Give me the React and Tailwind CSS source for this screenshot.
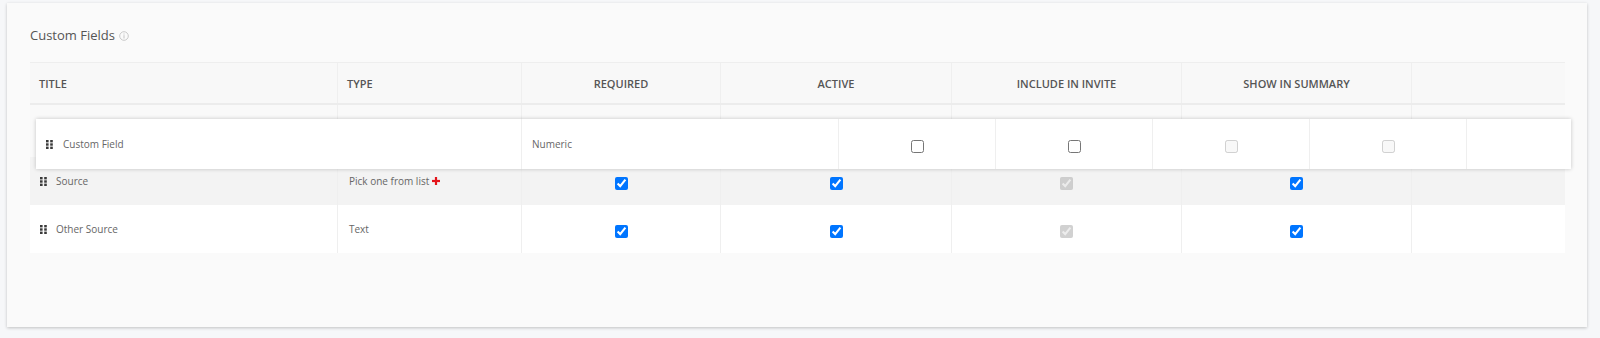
import React from 'react';

const headers = [
  { label: 'Title', w: 'w-[308px]', align: 'justify-start pl-[9px]' },
  { label: 'Type', w: 'w-[184px]', align: 'justify-start pl-[9px]' },
  { label: 'Required', w: 'w-[199px]', align: 'justify-center' },
  { label: 'Active', w: 'w-[231px]', align: 'justify-center' },
  { label: 'Include in invite', w: 'w-[230px]', align: 'justify-center' },
  { label: 'Show in summary', w: 'w-[230px]', align: 'justify-center' },
  { label: '', w: 'w-[153px]', align: 'justify-center' },
];

const rows = [
  { title: 'Source', type: 'Pick one from list', plus: true, bg: 'bg-[#f3f3f3]' },
  { title: 'Other Source', type: 'Text', plus: false, bg: 'bg-white' },
];

const Grip = () => (
  <svg width="7" height="9" viewBox="0 0 7 9" className="shrink-0">
    <rect x="0" y="0" width="2.6" height="2.4" fill="#3a3a3a" />
    <rect x="4.2" y="0" width="2.6" height="2.4" fill="#3a3a3a" />
    <rect x="0" y="3.3" width="2.6" height="2.4" fill="#3a3a3a" />
    <rect x="4.2" y="3.3" width="2.6" height="2.4" fill="#3a3a3a" />
    <rect x="0" y="6.6" width="2.6" height="2.4" fill="#3a3a3a" />
    <rect x="4.2" y="6.6" width="2.6" height="2.4" fill="#3a3a3a" />
  </svg>
);

const Box = ({ checked, disabled }) => (
  <input
    type="checkbox"
    defaultChecked={checked}
    disabled={disabled}
    className="block w-[13px] h-[13px] mt-[4px]"
  />
);

const App = () => {
  return (
    <div className="min-h-screen bg-[#f6f7f9] pt-[3px] pl-[7px] pr-[13px] font-['Open_Sans',sans-serif]">
      <div className="relative h-[324px] bg-[#fafafa] px-[23px] shadow-[0_1px_3px_rgba(0,0,0,0.22)]">
        {/* heading */}
        <div className="pt-[21px] h-[42px] flex items-center gap-[4px]">
          <span className="text-[13px] leading-[18px] text-[#555]">Custom Fields</span>
          <svg width="10" height="10" viewBox="0 0 10 10" className="mt-[3px]">
            <circle cx="5" cy="5" r="4.3" fill="none" stroke="#c4c4c4" strokeWidth="0.9" />
            <rect x="4.5" y="4.2" width="1" height="3.3" fill="#c4c4c4" />
            <rect x="4.5" y="2.5" width="1" height="1" fill="#c4c4c4" />
          </svg>
        </div>

        {/* table */}
        <div className="mt-[17px] w-[1535px]">
          <div className="flex h-[43px] bg-[#f8f8f8] border-t border-[#eeeeee] border-b-2 border-b-[#ececec]">
            {headers.map((h, i) => (
              <div
                key={i}
                className={`${h.w} ${h.align} flex items-center pt-[3px] text-[11px] font-semibold uppercase text-[#555] ${i < headers.length - 1 ? 'border-r border-[#efefef]' : ''}`}
              >
                {h.label}
              </div>
            ))}
          </div>

          {/* placeholder left behind by the row being dragged */}
          <div className="flex h-[52px] bg-[#f9f9f9]">
            {headers.map((h, i) => (
              <div key={i} className={`${h.w} ${i < headers.length - 1 ? 'border-r border-[#efefef]' : ''}`} />
            ))}
          </div>

          {rows.map((r) => (
            <div key={r.title} className={`flex h-[48px] ${r.bg} text-[10px] text-[#666]`}>
              <div className="w-[308px] flex items-center gap-[9px] pl-[10px] border-r border-[#efefef]">
                <Grip />
                <span>{r.title}</span>
              </div>
              <div className="w-[184px] flex items-center pl-[11px] border-r border-[#efefef]">
                <span>{r.type}</span>
                {r.plus && (
                  <svg width="8" height="8" viewBox="0 0 8 8" className="ml-[3px]">
                    <rect x="2.9" y="0" width="2.2" height="8" fill="#e3141b" />
                    <rect x="0" y="2.9" width="8" height="2.2" fill="#e3141b" />
                  </svg>
                )}
              </div>
              <div className="w-[199px] flex items-center justify-center border-r border-[#efefef]">
                <Box checked />
              </div>
              <div className="w-[231px] flex items-center justify-center border-r border-[#efefef]">
                <Box checked />
              </div>
              <div className="w-[230px] flex items-center justify-center border-r border-[#efefef]">
                <Box checked disabled />
              </div>
              <div className="w-[230px] flex items-center justify-center border-r border-[#efefef]">
                <Box checked />
              </div>
              <div className="w-[153px]" />
            </div>
          ))}
        </div>

        {/* row being dragged */}
        <div className="absolute left-[29px] top-[116px] w-[1535px] h-[50px] flex bg-white shadow-[0_0_4px_rgba(0,0,0,0.22)] text-[10px] text-[#666]">
          <div className="w-[486px] flex items-center gap-[10px] pl-[10px] border-r border-[#efefef]">
            <Grip />
            <span>Custom Field</span>
          </div>
          <div className="w-[317px] flex items-center pl-[10px] border-r border-[#efefef]">Numeric</div>
          <div className="w-[157px] flex items-center justify-center border-r border-[#efefef]">
            <Box />
          </div>
          <div className="w-[157px] flex items-center justify-center border-r border-[#efefef]">
            <Box />
          </div>
          <div className="w-[157px] flex items-center justify-center border-r border-[#efefef]">
            <Box disabled />
          </div>
          <div className="w-[157px] flex items-center justify-center border-r border-[#efefef]">
            <Box disabled />
          </div>
          <div className="w-[104px]" />
        </div>
      </div>
    </div>
  );
};

export default App;
